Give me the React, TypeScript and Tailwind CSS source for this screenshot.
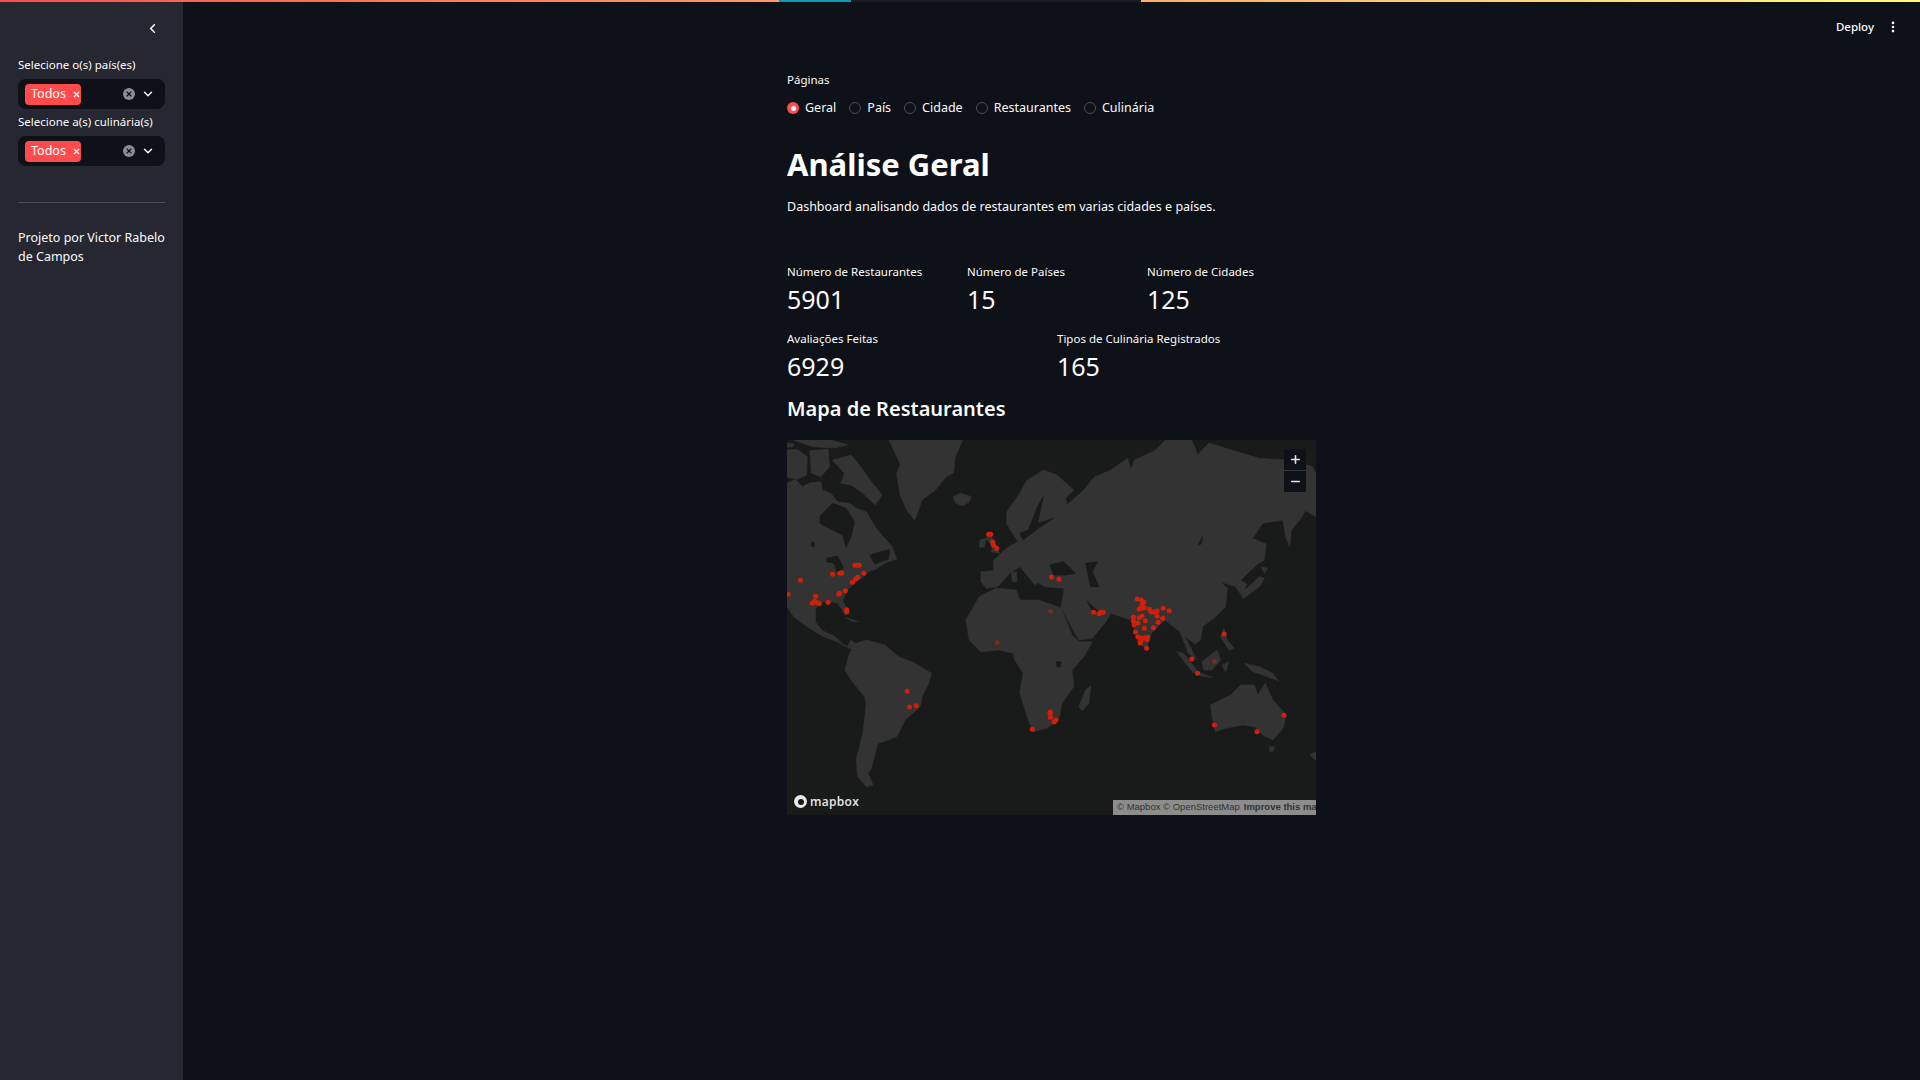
import { ChevronDown, ChevronLeft, EllipsisVertical, Minus, Plus, X } from "lucide-react"

const land = [
  // north america
  "M0,130 L25,118 45,140 70,128 100,125 105,150 130,160 150,185 185,190 205,205 235,215 262,262 285,290 310,318 325,358 292,368 262,388 238,396 225,412 196,432 178,452 165,482 185,520 172,524 150,488 122,484 95,488 84,510 84,545 105,572 140,588 165,612 195,630 205,612 190,600 178,622 150,605 108,590 60,560 20,530 0,500 Z",
  "M0,30 L30,28 60,50 58,105 30,118 0,112 Z",
  "M68,32 L122,28 126,80 100,110 72,100 Z",
  "M135,60 L190,45 222,85 250,125 282,165 262,195 225,160 190,135 160,130 170,100 Z",
  "M20,0 L130,0 180,14 140,24 75,20 Z",
  "M0,10 L20,12 18,20 0,22 Z",
  // caribbean
  "M172,532 L212,545 195,545 Z",
  // greenland + iceland
  "M302,0 L520,0 508,30 498,52 494,98 470,112 440,150 400,180 385,225 378,240 355,210 335,165 325,102 336,72 316,30 Z",
  "M492,170 L515,160 546,170 540,186 520,197 500,190 Z",
  // south america
  "M205,610 L235,600 290,615 330,650 380,670 428,700 420,730 400,770 395,800 350,840 325,890 300,900 270,910 260,945 250,985 240,1000 255,1035 235,1040 210,1010 205,960 225,880 235,790 230,770 190,720 172,690 185,640 Z",
  // eurasia
  "M575,395 L612,392 612,362 650,325 685,305 672,285 650,250 652,215 690,160 710,122 760,90 800,105 850,150 825,175 830,195 880,150 910,112 960,90 1010,55 1020,90 1030,60 1090,32 1122,0 1200,0 1217,44 1251,9 1300,25 1400,55 1468,59 1557,79 1568,100 1568,230 1537,212 1520,240 1495,270 1490,320 1478,290 1470,240 1410,250 1380,295 1420,312 1415,360 1395,372 1345,420 1362,432 1350,470 1330,440 1285,425 1305,445 1300,500 1270,530 1232,560 1226,600 1210,612 1180,590 1172,575 1215,660 1190,640 1165,575 1120,540 1080,580 1065,628 1040,605 1020,540 960,520 945,545 905,595 865,600 845,565 812,500 822,445 765,440 720,415 690,380 660,400 625,440 590,445 575,425 Z",
  // africa
  "M530,540 L570,470 620,445 680,450 690,480 745,480 812,503 845,585 865,605 905,605 880,650 845,690 850,740 815,790 805,840 770,865 730,875 715,840 690,760 700,700 675,660 670,640 630,630 575,635 540,600 Z",
  // islands
  "M590,295 L600,278 612,300 630,340 605,335 610,320 Z",
  "M572,300 L590,295 585,322 570,322 Z",
  "M720,385 L745,425 735,435 715,410 Z",
  "M665,398 L680,395 682,425 668,425 Z",
  "M885,750 L900,738 895,790 875,812 865,800 Z",
  "M1345,462 L1400,410 1415,415 1400,440 1352,476 Z",
  "M1405,380 L1425,385 1415,400 Z",
  "M1295,565 L1305,600 1325,625 1310,630 1285,590 Z",
  "M1155,635 L1175,640 1215,690 1205,700 Z",
  "M1215,695 L1260,712 1225,708 Z",
  "M1230,665 L1275,630 1285,660 1260,690 1235,690 Z",
  "M1290,675 L1310,665 1300,695 Z",
  "M1355,670 L1400,680 1440,700 1456,722 1410,705 1380,695 Z",
  "M1255,795 L1315,765 1345,735 1385,735 1395,765 1418,730 1440,780 1480,825 1470,865 1440,900 1410,885 1385,860 1350,855 1300,865 1270,875 1262,840 Z",
  "M1430,920 L1445,920 1440,935 1432,935 Z",
  "M1550,945 L1568,935 1568,962 Z",
]

const water = [
  // hudson bay, great lakes, st lawrence
  "M98,228 L135,190 175,205 200,245 190,290 175,322 165,285 130,268 98,250 Z",
  "M118,355 L150,348 168,385 148,395 140,370 118,365 Z",
  "M245,345 L305,328 300,358 260,372 Z",
  "M72,305 L82,308 80,322 72,318 Z",
  // north sea and baltic
  "M715,270 L745,195 760,170 742,250 790,235 745,265 700,300 690,280 Z",
  // black sea, caspian, persian gulf, lake baikal
  "M780,375 L820,365 855,400 825,405 790,405 Z",
  "M885,370 L920,365 905,395 925,440 900,440 Z",
  "M890,485 L925,515 905,512 Z",
  "M1218,315 L1232,290 1228,312 Z",
  "M798,665 L812,665 810,680 800,680 Z",
]

const dots: [number, number][] = [
  [40, 421], [3, 463], [85, 469], [75, 490], [82, 484], [90, 488], [96, 491], [122, 487], [135, 403], [157, 400], [162, 399],
  [201, 376], [209, 376], [214, 376], [228, 400], [194, 427], [204, 417], [210, 412], [173, 452], [153, 462], [156, 460], [177, 509], [177, 515],
  [598, 283], [604, 283], [610, 306], [612, 316], [622, 325], [784, 411], [806, 418], [909, 517], [925, 521], [930, 517], [937, 517],
  [1038, 477], [1050, 480], [1058, 487], [1052, 495], [1052, 505], [1044, 507], [1059, 503], [1074, 508], [1079, 516], [1089, 516], [1097, 513], [1097, 528],
  [1115, 505], [1133, 512], [1114, 535], [1100, 547], [1086, 563], [1059, 565], [1062, 542], [1052, 528], [1044, 533], [1027, 531], [1027, 544], [1029, 554],
  [1040, 549], [1033, 576], [1040, 591], [1049, 594], [1059, 594], [1069, 592], [1067, 599], [1049, 604], [1047, 609], [1066, 625],
  [1296, 582], [1200, 657], [1217, 700], [356, 754], [363, 801], [383, 797], [780, 816], [780, 820], [781, 832], [797, 840], [792, 846], [727, 868],
  [1473, 826], [1267, 855], [1393, 875],
]

const fadedDots: [number, number][] = [[781, 514], [623, 608], [1267, 665]]

const radios = ["Geral", "País", "Cidade", "Restaurantes", "Culinária"]

const Multiselect = ({ label }: { label: string }) => (
  <div className="flex flex-col gap-[6px]">
    <p className="text-[11.5px] leading-[16px] text-[#fafafa]">{label}</p>
    <div className="flex h-[30px] items-center rounded-lg bg-[#0e1117] pl-[7px] pr-[10px]">
      <span className="flex h-[21px] w-[56px] items-center gap-[6px] rounded-[4px] bg-[#ff4b4b] pl-[6px] text-[12.5px] text-white">
        Todos
        <X size={9} strokeWidth={3} />
      </span>
      <span className="ml-auto flex h-[12px] w-[12px] items-center justify-center rounded-full bg-[#8b8c95] text-[#0e1117]">
        <X size={8} strokeWidth={3.5} />
      </span>
      <ChevronDown size={14} strokeWidth={2.5} className="ml-[6px] text-[#fafafa]" />
    </div>
  </div>
)

const Metric = ({ label, value }: { label: string; value: string }) => (
  <div>
    <p className="text-[11.5px] leading-[16px] text-[#fafafa]">{label}</p>
    <p className="mt-[2px] text-[25px] leading-[34px] text-[#fafafa]">{value}</p>
  </div>
)

const WorldMap = () => (
  <div className="relative h-[375px] w-full overflow-hidden bg-[#191a1a]">
    <svg viewBox="0 0 1568 1125" preserveAspectRatio="none" className="h-full w-full">
      {land.map((d, index) => <path key={index} d={d} fill="#343333" stroke="#343333" strokeWidth="2" strokeLinejoin="round" />)}
      {water.map((d, index) => <path key={index} d={d} fill="#191a1a" stroke="#191a1a" strokeWidth="2" strokeLinejoin="round" />)}
      {fadedDots.map(([x, y], index) => <circle key={index} cx={x} cy={y} r="7" fill="#7c2c1c" />)}
      {dots.map(([x, y], index) => <circle key={index} cx={x} cy={y} r="7.5" fill="#d41f08" />)}
    </svg>
    <div className="absolute right-[10px] top-[9px] flex w-[22px] flex-col bg-[#0e1117] text-[#e4e4e4]">
      <span className="flex h-[22px] items-center justify-center border-b border-[#33353b]"><Plus size={13} strokeWidth={3} /></span>
      <span className="flex h-[21px] items-center justify-center"><Minus size={13} strokeWidth={3} /></span>
    </div>
    <div className="absolute bottom-[7px] left-[7px] flex items-center gap-[3px] text-[#e8e8e8]">
      <span className="flex h-[13px] w-[13px] items-center justify-center rounded-full bg-[#e8e8e8]">
        <span className="h-[6px] w-[6px] rounded-full bg-[#191a1a]" />
      </span>
      <span className="font-['Open_Sans',sans-serif] text-[12px] font-semibold leading-none tracking-[0.3px]">mapbox</span>
    </div>
    <div className="absolute bottom-0 right-0 flex h-[15px] w-[203px] items-center whitespace-nowrap bg-[#8c8c8c] pl-[4px] font-['Liberation_Sans',sans-serif] text-[9.5px] text-[#333333]">
      © Mapbox © OpenStreetMap
      <span className="ml-[4px] font-bold">Improve this map</span>
    </div>
  </div>
)

export default function App() {
  return (
    <div className="relative flex h-[1080px] w-[1920px] overflow-hidden bg-[#0e1117] font-['Noto_Sans',sans-serif] text-[#fafafa]">
      <div className="absolute inset-x-0 top-0 flex h-[2px]">
        <div className="w-[779px] bg-gradient-to-r from-[#ff4b4b] to-[#ff9b68]" />
        <div className="w-[72px] bg-[#0e9ab5]" />
        <div className="w-[290px] bg-[#1a1c22]" />
        <div className="flex-1 bg-gradient-to-r from-[#ffae6d] to-[#fffd80]" />
      </div>

      <aside className="flex w-[183px] shrink-0 flex-col bg-[#262730] px-[18px]">
        <div className="flex justify-end pr-[5px] pt-[21px]">
          <ChevronLeft size={15} strokeWidth={2.5} />
        </div>
        <div className="mt-[21px] flex flex-col gap-[5px]">
          <Multiselect label="Selecione o(s) país(es)" />
          <Multiselect label="Selecione a(s) culinária(s)" />
        </div>
        <div className="mt-[36px] h-px bg-[#4c4d56]" />
        <p className="mt-[25px] text-[12.5px] leading-[19px]">Projeto por Victor Rabelo de Campos</p>
      </aside>

      <main className="relative flex-1">
        <div className="absolute right-[20px] top-[18px] flex items-center gap-[12px]">
          <span className="text-[11.5px] font-medium">Deploy</span>
          <EllipsisVertical size={14} strokeWidth={2.5} />
        </div>
        <div className="mx-auto flex w-[529px] flex-col pt-[72px]">
          <p className="text-[11.5px] leading-[16px]">Páginas</p>
          <div className="mt-[13px] flex h-[14px] items-center gap-[13px]">
            {radios.map((radio, index) => (
              <div className="flex items-center gap-[6px]" key={radio}>
                {index === 0 ? (
                  <span className="flex h-[12px] w-[12px] items-center justify-center rounded-full bg-[#ff4b4b]">
                    <span className="h-[5px] w-[5px] rounded-full bg-white" />
                  </span>
                ) : (
                  <span className="h-[12px] w-[12px] rounded-full border border-[#4a4c55]" />
                )}
                <span className="text-[12.5px] leading-[14px]">{radio}</span>
              </div>
            ))}
          </div>
          <h1 className="mt-[29px] text-[31px] font-bold leading-[40px] text-white">Análise Geral</h1>
          <p className="mt-[14px] text-[12.5px] leading-[18px]">Dashboard analisando dados de restaurantes em varias cidades e países.</p>
          <div className="mt-[48px] grid grid-cols-3 gap-[11px]">
            <Metric label="Número de Restaurantes" value="5901" />
            <Metric label="Número de Países" value="15" />
            <Metric label="Número de Cidades" value="125" />
          </div>
          <div className="mt-[15px] grid grid-cols-2 gap-[11px]">
            <Metric label="Avaliações Feitas" value="6929" />
            <Metric label="Tipos de Culinária Registrados" value="165" />
          </div>
          <h3 className="mt-[12px] text-[20px] font-semibold leading-[28px] text-[#fafafa]">Mapa de Restaurantes</h3>
          <div className="mt-[17px]"><WorldMap /></div>
        </div>
      </main>
    </div>
  )
}
